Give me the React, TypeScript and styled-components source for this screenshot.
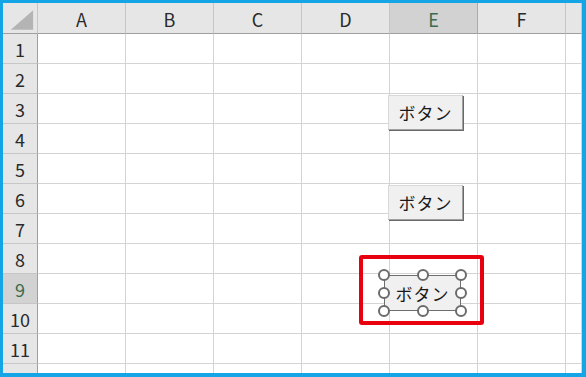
import React from "react";
import styled, { createGlobalStyle, css } from "styled-components";

const Global = createGlobalStyle`
  html, body { margin: 0; padding: 0; background: #ffffff; }
  body { font-family: "Noto Sans CJK JP", "Noto Sans", sans-serif; }
`;

const Frame = styled.div`
  width: 586px;
  height: 377px;
  box-sizing: border-box;
  border-style: solid;
  border-color: #14a5e6;
  border-width: 3px 4px 4px 3px;
  overflow: hidden;
  position: relative;
  background: #ffffff;
`;

const Sheet = styled.div`
  display: grid;
  grid-template-columns: 35px repeat(6, 88px) 1fr;
  grid-template-rows: 31px repeat(12, 30px);
  width: 100%;
`;

const Cell = styled.div`
  box-sizing: border-box;
  border-right: 1px solid #d4d4d4;
  border-bottom: 1px solid #d4d4d4;
  background: #ffffff;
`;

const HeaderBase = css`
  box-sizing: border-box;
  display: flex;
  align-items: center;
  justify-content: center;
  font-size: 18px;
  font-weight: 400;
  line-height: 1;
`;

const ColHeader = styled.div<{ $sel?: boolean }>`
  ${HeaderBase};
  background: ${(p) => (p.$sel ? "#d2d2d2" : "#e6e6e6")};
  color: ${(p) => (p.$sel ? "#3c6b4c" : "#2a2a2a")};
  border-right: 1px solid ${(p) => (p.$sel ? "#ababab" : "#c6c6c6")};
  border-bottom: 1px solid #9e9e9e;
  padding-top: 1px;
`;

const RowHeader = styled.div<{ $sel?: boolean }>`
  ${HeaderBase};
  background: ${(p) => (p.$sel ? "#d2d2d2" : "#e6e6e6")};
  color: ${(p) => (p.$sel ? "#3c6b4c" : "#2a2a2a")};
  border-right: 1px solid #9e9e9e;
  border-bottom: 1px solid #c6c6c6;
`;

const Corner = styled.div`
  box-sizing: border-box;
  background: #e6e6e6;
  border-right: 1px solid #c6c6c6;
  border-bottom: 1px solid #9e9e9e;
  display: flex;
  align-items: flex-start;
  justify-content: flex-start;
`;

const FormButton = styled.div<{ $top: number; $left: number }>`
  position: absolute;
  left: ${(p) => p.$left}px;
  top: ${(p) => p.$top}px;
  width: 75px;
  height: 35px;
  box-sizing: border-box;
  background: #f0f0f0;
  border-top: 1px solid #d8d8d8;
  border-left: 1px solid #d8d8d8;
  border-right: 1px solid #a0a0a0;
  border-bottom: 1px solid #a0a0a0;
  box-shadow: 1px 1px 0 #696969;
  display: flex;
  align-items: center;
  justify-content: center;
  font-size: 17px;
  letter-spacing: 1px;
  color: #1a1a1a;
`;

const SelectedButton = styled.div`
  position: absolute;
  left: 381px;
  top: 272px;
  width: 77px;
  height: 36px;
  box-sizing: border-box;
  background: #f0f0f0;
  border: 1px solid #6e6e6e;
  display: flex;
  align-items: center;
  justify-content: center;
  font-size: 17px;
  letter-spacing: 1px;
  color: #1a1a1a;
`;

const HandleLayer = styled.div`
  position: absolute;
  inset: -7px;
  display: grid;
  grid-template-columns: 12px 1fr 12px;
  grid-template-rows: 12px 1fr 12px;
  justify-items: center;
  align-items: center;
  pointer-events: none;
`;

const Handle = styled.span<{ $hidden?: boolean }>`
  width: 12px;
  height: 12px;
  box-sizing: border-box;
  border: 2px solid #6b6b6b;
  border-radius: 50%;
  background: #ffffff;
  visibility: ${(p) => (p.$hidden ? "hidden" : "visible")};
`;

const Highlight = styled.div`
  position: absolute;
  left: 356px;
  top: 252px;
  width: 125px;
  height: 70px;
  box-sizing: border-box;
  border: 4px solid #e8000f;
  border-radius: 3px;
`;

const columns = ["A", "B", "C", "D", "E", "F", ""];
const rows = Array.from({ length: 12 }, (_, i) => i + 1);

export default function App() {
  return (
    <>
      <Global />
      <Frame>
        <Sheet>
          <Corner>
            <svg width="35" height="31" viewBox="0 0 35 31">
              <polygon points="8,27 31,27 31,7" fill="#b4b4b4" />
            </svg>
          </Corner>
          {columns.map((c, i) => (
            <ColHeader key={`c${i}`} $sel={c === "E"}>
              {c}
            </ColHeader>
          ))}
          {rows.map((r) => (
            <React.Fragment key={r}>
              <RowHeader $sel={r === 9}>{r < 12 ? r : ""}</RowHeader>
              {columns.map((_, i) => (
                <Cell key={i} />
              ))}
            </React.Fragment>
          ))}
        </Sheet>
        <FormButton $left={385} $top={92}>ボタン</FormButton>
        <FormButton $left={385} $top={182}>ボタン</FormButton>
        <Highlight />
        <SelectedButton>
          ボタン
          <HandleLayer>
            {Array.from({ length: 9 }, (_, i) => (
              <Handle key={i} $hidden={i === 4} />
            ))}
          </HandleLayer>
        </SelectedButton>
      </Frame>
    </>
  );
}
